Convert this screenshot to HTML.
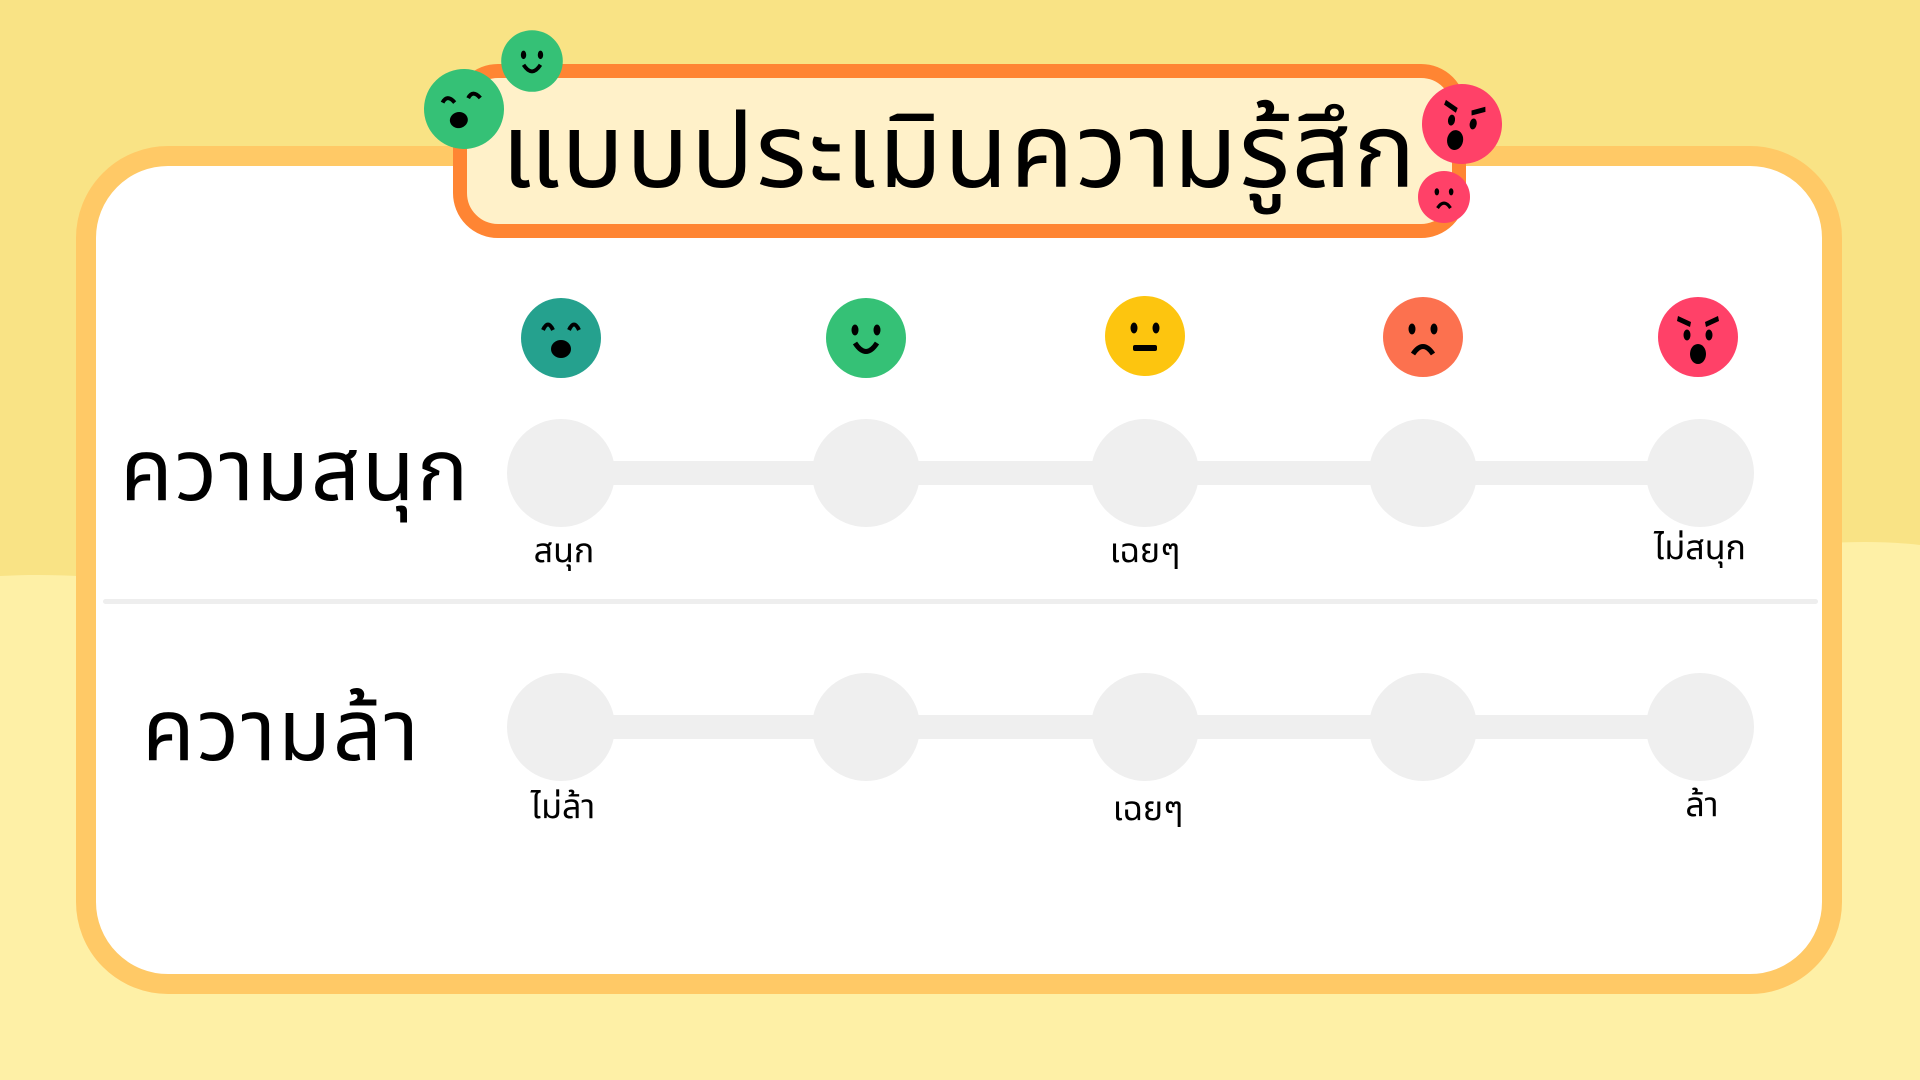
<!DOCTYPE html>
<html><head><meta charset="utf-8">
<style>
html,body{margin:0;padding:0;width:1920px;height:1080px;overflow:hidden;background:#F9E385;}
*{box-sizing:border-box;}
body{position:relative;font-family:"Liberation Sans","Noto Sans Thai","Loma","Garuda","Waree","Tlwg Typo",sans-serif;color:#000;}
.abs{position:absolute;}
.card{left:76px;top:146px;width:1766px;height:848px;background:#fff;border:20px solid #FFC966;border-radius:92px;}
.title{left:453px;top:64px;width:1013px;height:174px;background:#FFF1C9;border:14px solid #FF8533;border-radius:45px;}
.title span{position:absolute;left:0;right:0;top:4px;text-align:center;font-size:104px;line-height:140px;white-space:nowrap;letter-spacing:2px;}
.rowh{font-size:86px;line-height:90px;white-space:nowrap;letter-spacing:2px;}
.lbl{font-size:34px;line-height:36px;width:240px;text-align:center;white-space:nowrap;}
.div{left:103px;top:599px;width:1715px;height:5px;background:#EEEEEE;border-radius:3px;}
</style></head><body>
<svg class="abs" style="left:0;top:0" width="1920" height="1080">
<path d="M0,576 C300,560 500,740 960,700 C1400,660 1700,520 1920,545 L1920,1080 L0,1080Z" fill="#FEF0A6"/>
</svg>
<div class="abs card"></div>
<div class="abs div"></div>
<div class="abs title"><span>แบบประเมินความรู้สึก</span></div>

<div class="abs rowh" style="left:120px;top:426px;">ความสนุก</div>
<div class="abs rowh" style="left:142px;top:686px;">ความล้า</div>

<svg class="abs" style="left:0;top:0" width="1920" height="1080">
<defs>
<g id="laugh"><circle r="40" fill="#25A18E"/><path d="M-18,-8 Q-13,-19 -8,-8" stroke="#000" stroke-width="4" fill="none"/><path d="M8,-8 Q13,-19 18,-8" stroke="#000" stroke-width="4" fill="none"/><ellipse cx="0" cy="11" rx="10" ry="9" fill="#000"/></g>
<g id="smile"><circle r="40" fill="#35C176"/><ellipse cx="-11" cy="-8" rx="3.5" ry="5.5"/><ellipse cx="11" cy="-8" rx="3.5" ry="5.5"/><path d="M-11,5 Q0,22 11,5" stroke="#000" stroke-width="5" fill="none"/></g>
<g id="neutral"><circle r="40" fill="#FDC50F"/><ellipse cx="-11" cy="-8" rx="3.5" ry="5.5"/><ellipse cx="11" cy="-8" rx="3.5" ry="5.5"/><rect x="-12" y="9" width="24" height="6" rx="2"/></g>
<g id="sad"><circle r="40" fill="#FC714F"/><ellipse cx="-11" cy="-8" rx="3.5" ry="5.5"/><ellipse cx="11" cy="-8" rx="3.5" ry="5.5"/><path d="M-10,17 Q0,2 10,17" stroke="#000" stroke-width="5" fill="none"/></g>
<g id="angry"><circle r="40" fill="#FF4168"/><path d="M-20,-21 L-7,-15 L-8,-10 L-21,-16Z"/><path d="M20,-21 L7,-15 L8,-10 L21,-16Z"/><ellipse cx="-11" cy="-2" rx="3.5" ry="5.5"/><ellipse cx="11" cy="-2" rx="3.5" ry="5.5"/><ellipse cx="0" cy="17" rx="8" ry="10"/></g>
</defs>
<g transform="translate(464,109) rotate(-10)"><circle r="40" fill="#35C176"/><path d="M-20,-10 Q-14,-18 -8,-8" stroke="#000" stroke-width="4" fill="none"/><path d="M6,-10 Q12,-18 18,-8" stroke="#000" stroke-width="4" fill="none"/><ellipse cx="-7" cy="10" rx="9" ry="8"/></g>
<g transform="translate(532,61) scale(0.77)"><circle r="40" fill="#35C176"/><ellipse cx="-11" cy="-8" rx="3.5" ry="5.5"/><ellipse cx="11" cy="-8" rx="3.5" ry="5.5"/><path d="M-11,5 Q0,22 11,5" stroke="#000" stroke-width="5" fill="none"/></g>
<g transform="translate(1462,124) rotate(10)"><circle r="40" fill="#FF4168"/><path d="M-20,-21 L-7,-15 L-8,-10 L-21,-16Z"/><path d="M20,-21 L7,-15 L8,-10 L21,-16Z"/><ellipse cx="-11" cy="-2" rx="3.5" ry="5.5"/><ellipse cx="11" cy="-2" rx="3.5" ry="5.5"/><ellipse cx="-4" cy="17" rx="8" ry="10"/></g>
<g transform="translate(1444,197) scale(0.65)"><circle r="40" fill="#FF4168"/><ellipse cx="-11" cy="-8" rx="3.5" ry="5.5"/><ellipse cx="11" cy="-8" rx="3.5" ry="5.5"/><path d="M-10,17 Q0,2 10,17" stroke="#000" stroke-width="5" fill="none"/></g>
<use href="#laugh" x="561" y="338"/>
<use href="#smile" x="866" y="338"/>
<use href="#neutral" x="1145" y="336"/>
<use href="#sad" x="1423" y="337"/>
<use href="#angry" x="1698" y="337"/>
<g fill="#EFEFEF">
<rect x="561" y="461" width="1137" height="24"/>
<circle cx="561" cy="473" r="54"/><circle cx="866" cy="473" r="54"/><circle cx="1145" cy="473" r="54"/><circle cx="1423" cy="473" r="54"/><circle cx="1700" cy="473" r="54"/>
<rect x="561" y="715" width="1137" height="24"/>
<circle cx="561" cy="727" r="54"/><circle cx="866" cy="727" r="54"/><circle cx="1145" cy="727" r="54"/><circle cx="1423" cy="727" r="54"/><circle cx="1700" cy="727" r="54"/>
</g>
</svg>

<div class="abs lbl" style="left:444px;top:533px;">สนุก</div>
<div class="abs lbl" style="left:1025px;top:533px;">เฉยๆ</div>
<div class="abs lbl" style="left:1580px;top:530px;">ไม่สนุก</div>
<div class="abs lbl" style="left:443px;top:789px;">ไม่ล้า</div>
<div class="abs lbl" style="left:1028px;top:791px;">เฉยๆ</div>
<div class="abs lbl" style="left:1582px;top:787px;">ล้า</div>
</body></html>
